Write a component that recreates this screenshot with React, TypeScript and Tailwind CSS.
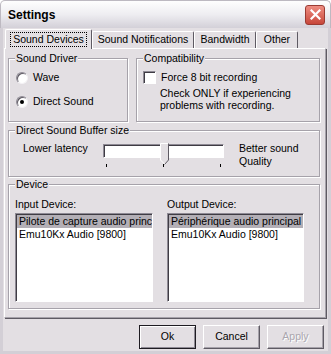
import React from "react";

const font = "font-['Liberation_Sans',Arial,sans-serif]";

const Radio = ({ checked }: { checked?: boolean }) => (
    <div className="w-[12px] h-[12px] rounded-full bg-white border border-t-[#8e8a94] border-l-[#8e8a94] border-r-[#f4f2f5] border-b-[#f4f2f5] shadow-[inset_1px_1px_0_#5e5a63] flex items-center justify-center">
        {checked ? <div className="w-[4px] h-[4px] rounded-full bg-black" /> : null}
    </div>
);

const GroupBox = ({
    title,
    className,
    children,
}: {
    title: string;
    className: string;
    children?: React.ReactNode;
}) => (
    <fieldset
        className={`border border-[#a6a2aa] shadow-[1px_1px_0_#fff,inset_1px_1px_0_#fff] ${className}`}
    >
        <legend className="ml-[6px] px-[1px] leading-[13px] bg-[#e3dfe3]">
            {title}
        </legend>
        {children}
    </fieldset>
);

const ListBox = ({ items }: { items: string[] }) => (
    <div className="h-[89px] bg-white border border-t-[#8e8a94] border-l-[#8e8a94] border-r-white border-b-white shadow-[inset_1px_1px_0_#3f3c44] pt-[1px] pl-[1px] overflow-hidden">
        {items.map((item, i) => (
            <div
                key={item}
                className={`h-[13px] leading-[13px] pl-[2px] whitespace-nowrap overflow-hidden ${
                    i == 0 ? "bg-[#b3afb6]" : ""
                }`}
            >
                {item}
            </div>
        ))}
    </div>
);

const Button = ({
    label,
    main,
    disabled,
}: {
    label: string;
    main?: boolean;
    disabled?: boolean;
}) => (
    <div
        className={`w-[57px] h-[24px] flex items-center justify-center bg-[#e3dfe3] ${
            main
                ? "border border-[#1e1c22] shadow-[inset_1px_1px_0_#fff,inset_-1px_-1px_0_#8e8a94]"
                : "border border-t-white border-l-white border-r-[#5e5a63] border-b-[#5e5a63] shadow-[inset_-1px_-1px_0_#a6a2aa]"
        } ${disabled ? "text-[#aaa6ae] [text-shadow:1px_1px_0_#fff]" : ""}`}
    >
        {label}
    </div>
);

export default function App() {
    return (
        <div
            className={`w-[331px] h-[354px] flex flex-col overflow-hidden text-[10.5px] text-black ${font}`}
        >
            <div className="h-[28px] shrink-0 flex items-center pl-[7px] pr-[5px] rounded-t-[5px] border-x border-t border-[#bdb9c1] bg-gradient-to-b from-[#fefefe] via-[#eeedf1] to-[#d3d0d8]">
                <span className="font-bold text-[12px]">Settings</span>
                <div className="ml-auto w-[20px] h-[20px] rounded-[3px] border border-[#9a3b33] bg-gradient-to-b from-[#ee8d82] to-[#c7463a] flex items-center justify-center">
                    <svg width="11" height="11" viewBox="0 0 11 11">
                        <path
                            d="M1.5 1.5 L9.5 9.5 M9.5 1.5 L1.5 9.5"
                            stroke="#fff"
                            strokeWidth="2.2"
                            strokeLinecap="square"
                        />
                    </svg>
                </div>
            </div>
            <div className="flex-1 flex flex-col bg-[#e3dfe3] border-x-[3px] border-b-[3px] border-[#d3cfd6]">
                <div className="flex-1 flex flex-col pl-[1px] pr-[2px]">
                    <div className="mt-[1px] h-[19px] flex items-end pl-[1px]">
                        <div className="relative z-10 -mb-[1px] w-[87px] h-[20px] flex items-start justify-center pt-[2px] bg-[#e3dfe3] border-l border-t border-white border-r border-r-[#5e5a63] rounded-t-[2px]">
                            <span className="px-[2px] leading-[13px] border border-dotted border-black">
                                Sound Devices
                            </span>
                        </div>
                        <div className="w-[102px] h-[17px] flex items-center justify-center border-l border-t border-white border-r border-r-[#5e5a63] rounded-t-[2px]">
                            Sound Notifications
                        </div>
                        <div className="w-[62px] h-[17px] flex items-center justify-center border-l border-t border-white border-r border-r-[#5e5a63] rounded-t-[2px]">
                            Bandwidth
                        </div>
                        <div className="w-[42px] h-[17px] flex items-center justify-center border-l border-t border-white border-r border-r-[#5e5a63] rounded-t-[2px]">
                            Other
                        </div>
                    </div>
                    <div className="h-[270px] flex flex-col border border-t-white border-l-white border-r-[#a6a2aa] border-b-[#a6a2aa] shadow-[1px_1px_0_#5e5a63] pl-[3px] pt-[3px]">
                        <div className="flex gap-[8px]">
                            <GroupBox title="Sound Driver" className="w-[120px] h-[70px]">
                                <div className="pl-[7px] mt-[6px] flex flex-col gap-[11px]">
                                    <div className="flex items-center gap-[5px] h-[13px]">
                                        <Radio />
                                        <span>Wave</span>
                                    </div>
                                    <div className="flex items-center gap-[5px] h-[13px]">
                                        <Radio checked />
                                        <span>Direct Sound</span>
                                    </div>
                                </div>
                            </GroupBox>
                            <GroupBox title="Compatibility" className="w-[184px] h-[70px]">
                                <div className="pl-[6px] mt-[6px] flex items-center gap-[5px] h-[13px]">
                                    <div className="w-[13px] h-[13px] bg-white border border-t-[#8e8a94] border-l-[#8e8a94] border-r-white border-b-white shadow-[inset_1px_1px_0_#3f3c44]" />
                                    <span>Force 8 bit recording</span>
                                </div>
                                <div className="pl-[23px] mt-[3px] leading-[12px]">
                                    Check ONLY if experiencing
                                    <br />
                                    problems with recording.
                                </div>
                            </GroupBox>
                        </div>
                        <GroupBox title="Direct Sound Buffer size" className="mt-[2px] w-[312px] h-[53px]">
                            <div className="flex items-start pl-[14px]">
                                <span className="w-[80px] mt-[5px] leading-[13px]">
                                    Lower latency
                                </span>
                                <div className="relative mt-[7px] w-[121px] h-[14px] bg-white border border-t-[#8e8a94] border-l-[#8e8a94] border-r-white border-b-white shadow-[inset_1px_1px_0_#3f3c44]">
                                    <svg
                                        className="absolute left-[56px] -top-[2px]"
                                        width="9"
                                        height="22"
                                        viewBox="0 0 9 22"
                                    >
                                        <path d="M0.5 0.5 H8.5 V17 L4.5 21.5 L0.5 17 Z" fill="#e3dfe3" />
                                        <path d="M0.5 17 V0.5 H8" stroke="#fff" fill="none" />
                                        <path d="M8.5 0.5 V17 L4.5 21.5" stroke="#5e5a63" fill="none" />
                                        <path d="M0.5 17 L4.5 21" stroke="#fff" fill="none" />
                                    </svg>
                                    <div className="absolute left-[2px] top-[19px] w-[1px] h-[3px] bg-black" />
                                    <div className="absolute left-[59px] top-[19px] w-[1px] h-[3px] bg-black" />
                                    <div className="absolute left-[116px] top-[19px] w-[1px] h-[3px] bg-black" />
                                </div>
                                <div className="ml-[15px] mt-[5px] leading-[13px]">
                                    Better sound
                                    <br />
                                    Quality
                                </div>
                            </div>
                        </GroupBox>
                        <GroupBox title="Device" className="mt-[1px] w-[312px] h-[131px]">
                            <div className="grid grid-cols-[152px_137px] pl-[6px] mt-[7px]">
                                <div>
                                    <div className="leading-[13px]">Input Device:</div>
                                    <div className="mt-[2px] w-[138px]">
                                        <ListBox
                                            items={[
                                                "Pilote de capture audio principal",
                                                "Emu10Kx Audio [9800]",
                                            ]}
                                        />
                                    </div>
                                </div>
                                <div>
                                    <div className="leading-[13px]">Output Device:</div>
                                    <div className="mt-[2px] w-[137px]">
                                        <ListBox
                                            items={[
                                                "Périphérique audio principal",
                                                "Emu10Kx Audio [9800]",
                                            ]}
                                        />
                                    </div>
                                </div>
                            </div>
                        </GroupBox>
                    </div>
                    <div className="mt-[7px] flex justify-end gap-[7px] pr-[2px]">
                        <Button label="Ok" main />
                        <Button label="Cancel" />
                        <Button label="Apply" disabled />
                    </div>
                </div>
            </div>
        </div>
    );
}
